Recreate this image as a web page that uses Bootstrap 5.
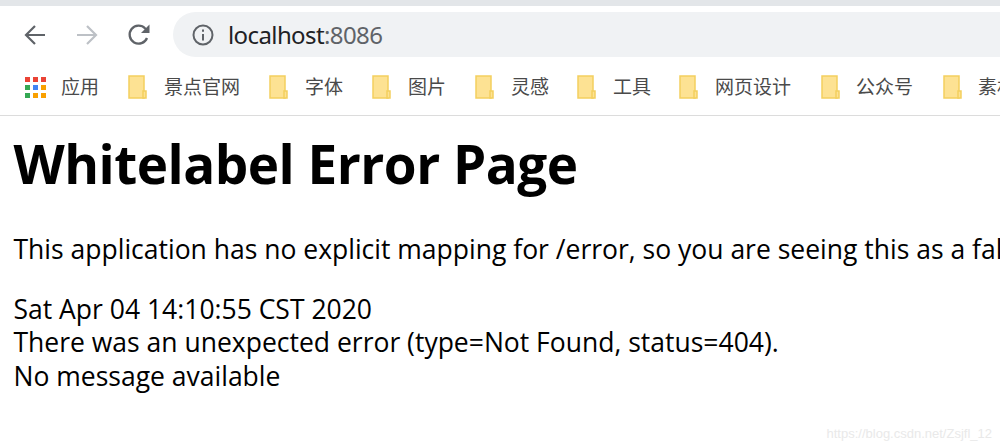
<!DOCTYPE html>
<html lang="zh">
<head>
<meta charset="utf-8">
<title>Whitelabel Error Page</title>
<link href="https://cdn.jsdelivr.net/npm/bootstrap@5.3.0/dist/css/bootstrap.min.css" rel="stylesheet">
<style>
html,body{height:448px;overflow:hidden;background:#fff}
body{position:relative;font-family:"Noto Sans","Noto Sans CJK SC",sans-serif}
.topstrip{height:6px;background:#e3e6e9}
.toolbar{height:52px;padding-top:5px}
.navico{width:24px;height:24px;flex:none}
.navs{width:173px;padding-left:23px;gap:28px}
.addr{flex:1;height:45px;background:#f0f2f4;border-radius:23px 0 0 23px;padding-left:18px;gap:13px;font-size:24px;color:#202124;letter-spacing:-.6px}
.addr span span{color:#5f6368}
.marks{height:58px;border-bottom:1px solid #dcdcdc;padding-left:25px;font-family:"Noto Sans CJK SC","Noto Sans",sans-serif;font-size:19px;color:#4a4a4a;white-space:nowrap;overflow:hidden}
.mk{flex:none;align-items:center}
.mk svg{flex:none;margin-right:16px}
.mk1{width:103px}.mk2{width:141px}.mk3{width:103px}.mk4{width:103px}.mk5{width:102px}.mk6{width:102px}.mk7{width:142px}.mk8{width:122px}
.appico{margin-right:14px!important}
.mk8 svg,.mklast svg{margin-right:15px}
.pagebody{padding-left:13.5px;color:#000;font-family:"Open Sans","Noto Sans",sans-serif;overflow:hidden}
.errhead{font-size:53px;font-weight:700;line-height:72px;margin:12px 0 0;letter-spacing:-.5px;white-space:nowrap}
.errtext{font-size:26.5px;line-height:33.5px;margin:0;white-space:nowrap}
.errfirst{margin:33px 0 26px}
.wmark{position:absolute;right:8px;bottom:5px;font-family:"Liberation Sans",sans-serif;font-size:13px;color:#e9e9e9}
</style>
</head>
<body>
<div class="topstrip"></div>
<div class="toolbar d-flex align-items-center">
  <div class="navs d-flex align-items-center">
    <svg class="navico" viewBox="0 0 24 24" fill="none" stroke="#5f6368" stroke-width="2.2"><path d="M22 12H3M12 3l-9 9 9 9"/></svg>
    <svg class="navico" viewBox="0 0 24 24" fill="none" stroke="#bdc1c6" stroke-width="2.2"><path d="M2 12h19M12 3l9 9-9 9"/></svg>
    <svg class="navico" viewBox="0 0 24 24"><path fill="none" stroke="#5f6368" stroke-width="2.3" d="M20 15a9 9 0 1 1-1.8-9.5L21 8"/><path fill="#5f6368" d="M22.500 1.500V10h-8.500z"/></svg>
  </div>
  <div class="addr d-flex align-items-center">
    <svg width="24" height="24" viewBox="0 0 24 24" fill="none" stroke="#5f6368" stroke-width="2"><circle cx="12" cy="12" r="9.500"/><path d="M12 11v6.500M12 6.500v2.200"/></svg>
    <span>localhost<span>:8086</span></span>
  </div>
</div>
<div class="marks d-flex align-items-center">
  <div class="mk mk1 d-flex"><svg class="appico" width="22" height="22" viewBox="0 0 22 22"><g fill="#ea4335"><rect y="1" width="5" height="5"/><rect x="8" y="1" width="5" height="5"/><rect x="16" y="1" width="5" height="5"/></g><rect y="9" width="5" height="5" fill="#34a853"/><rect x="8" y="9" width="5" height="5" fill="#4285f4"/><rect x="16" y="9" width="5" height="5" fill="#f9a000"/><rect y="17" width="5" height="5" fill="#34a853"/><rect x="8" y="17" width="5" height="5" fill="#f9a000"/><rect x="16" y="17" width="5" height="5" fill="#f9a000"/></svg>应用</div>
  <div class="mk mk2 d-flex"><svg width="20" height="24" viewBox="0 0 20 24"><path fill="#fde293" stroke="#f3cf5f" stroke-width="1.500" d="M1 1h15v22H1z"/><path fill="#fde293" stroke="#f3cf5f" stroke-width="1.500" d="M15 16h3v7h-3z"/></svg>景点官网</div>
  <div class="mk mk3 d-flex"><svg width="20" height="24" viewBox="0 0 20 24"><path fill="#fde293" stroke="#f3cf5f" stroke-width="1.500" d="M1 1h15v22H1z"/><path fill="#fde293" stroke="#f3cf5f" stroke-width="1.500" d="M15 16h3v7h-3z"/></svg>字体</div>
  <div class="mk mk4 d-flex"><svg width="20" height="24" viewBox="0 0 20 24"><path fill="#fde293" stroke="#f3cf5f" stroke-width="1.500" d="M1 1h15v22H1z"/><path fill="#fde293" stroke="#f3cf5f" stroke-width="1.500" d="M15 16h3v7h-3z"/></svg>图片</div>
  <div class="mk mk5 d-flex"><svg width="20" height="24" viewBox="0 0 20 24"><path fill="#fde293" stroke="#f3cf5f" stroke-width="1.500" d="M1 1h15v22H1z"/><path fill="#fde293" stroke="#f3cf5f" stroke-width="1.500" d="M15 16h3v7h-3z"/></svg>灵感</div>
  <div class="mk mk6 d-flex"><svg width="20" height="24" viewBox="0 0 20 24"><path fill="#fde293" stroke="#f3cf5f" stroke-width="1.500" d="M1 1h15v22H1z"/><path fill="#fde293" stroke="#f3cf5f" stroke-width="1.500" d="M15 16h3v7h-3z"/></svg>工具</div>
  <div class="mk mk7 d-flex"><svg width="20" height="24" viewBox="0 0 20 24"><path fill="#fde293" stroke="#f3cf5f" stroke-width="1.500" d="M1 1h15v22H1z"/><path fill="#fde293" stroke="#f3cf5f" stroke-width="1.500" d="M15 16h3v7h-3z"/></svg>网页设计</div>
  <div class="mk mk8 d-flex"><svg width="20" height="24" viewBox="0 0 20 24"><path fill="#fde293" stroke="#f3cf5f" stroke-width="1.500" d="M1 1h15v22H1z"/><path fill="#fde293" stroke="#f3cf5f" stroke-width="1.500" d="M15 16h3v7h-3z"/></svg>公众号</div>
  <div class="mk mklast d-flex"><svg width="20" height="24" viewBox="0 0 20 24"><path fill="#fde293" stroke="#f3cf5f" stroke-width="1.500" d="M1 1h15v22H1z"/><path fill="#fde293" stroke="#f3cf5f" stroke-width="1.500" d="M15 16h3v7h-3z"/></svg>素材</div>
</div>
<div class="pagebody">
  <h1 class="errhead">Whitelabel Error Page</h1>
  <p class="errtext errfirst">This application has no explicit mapping for /error, so you are seeing this as a fallback.</p>
  <div class="errtext">Sat Apr 04 14:10:55 CST 2020</div>
  <div class="errtext">There was an unexpected error (type=Not Found, status=404).</div>
  <div class="errtext">No message available</div>
</div>
<div class="wmark">https://blog.csdn.net/Zsjfl_12</div>
</body>
</html>
